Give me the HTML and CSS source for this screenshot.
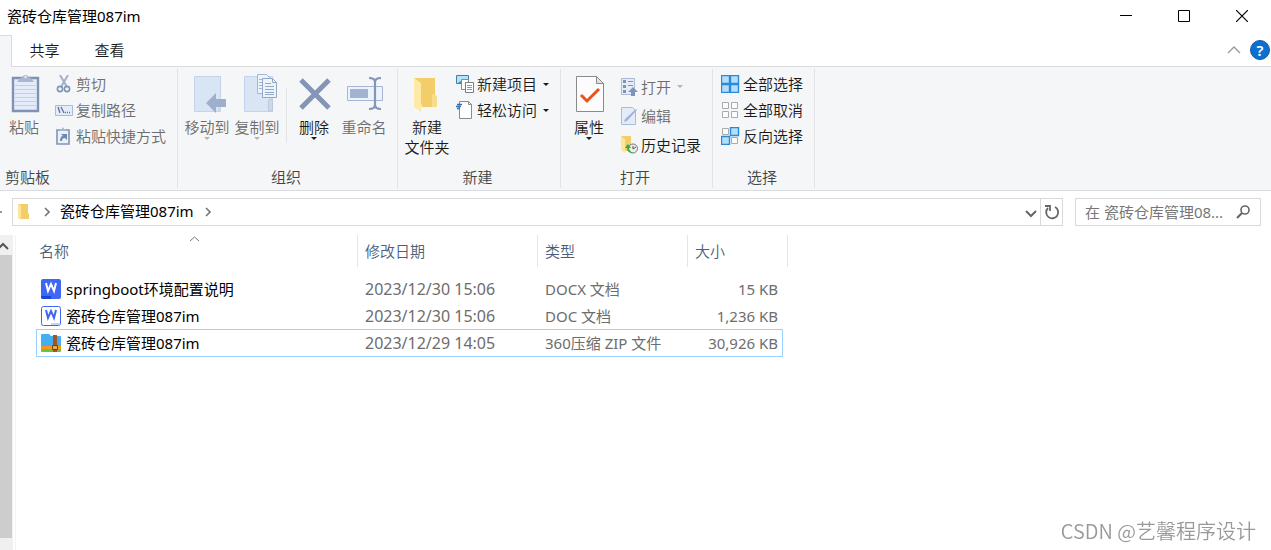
FILE: index.html
```html
<!DOCTYPE html>
<html lang="zh-CN">
<head>
  <meta charset="UTF-8">
  <title>瓷砖仓库管理087im</title>
  <link rel="stylesheet" href="styles.css">
</head>
<body>
  <header class="titlebar">
    <h1>瓷砖仓库管理087im</h1>
    <div class="window-buttons">
      <button aria-label="最小化"><svg width="12" height="12"><path d="M0 5.500h12" stroke="#000"/></svg></button>
      <button aria-label="最大化"><svg width="12" height="12"><path d="M.5 .5h11v11H.5z" fill="none" stroke="#000"/></svg></button>
      <button aria-label="关闭"><svg width="12" height="12"><path d="M0 0l12 12M12 0L0 12" stroke="#000" stroke-width="1.2"/></svg></button>
    </div>
  </header>

  <nav class="tabs">
    <span class="tab-edge"></span>
    <button class="tab">共享</button>
    <button class="tab">查看</button>
    <div class="tabs-right">
      <button aria-label="折叠功能区"><svg width="14" height="8"><path d="M1 7l6-6 6 6" fill="none" stroke="#999" stroke-width="1.3"/></svg></button>
      <button class="help" aria-label="帮助">?</button>
    </div>
  </nav>

  <section class="ribbon">
    <div class="group clipboard">
      <div class="tools">
        <button class="big" disabled>
          <svg width="50" height="44">
            <path d="M14 6h25v33H14z" fill="#e3ecf8" stroke="#8193b5" stroke-width="2.400"/>
            <path d="M16 13.500h21M16 17.500h21M16 21.500h21M16 25.500h21M16 29.500h21M16 33.500h21" stroke="#c3d0e4"/>
            <path d="M18 10l3-4h2c1-4 6-4 7 0h2l3 4z" fill="#a9b7d0"/>
            <circle cx="26.500" cy="5" r="1.200" fill="#e3ecf8"/>
          </svg>
          <span>粘贴</span>
        </button>
        <div class="list">
          <button disabled><svg width="18" height="18"><path d="M5 0l7 12M13 0L6 12" stroke="#a3b0ca" stroke-width="2"/><circle cx="5" cy="14" r="2.600" fill="none" stroke="#8193b5" stroke-width="1.600"/><circle cx="12" cy="14" r="2.600" fill="none" stroke="#8193b5" stroke-width="1.600"/></svg>剪切</button>
          <button disabled><svg width="18" height="18"><path d="M.5 4.500h17v10H.5z" fill="#e3ecf8" stroke="#a9bbd8"/><path d="M3 6l2 6M6 6l3 6M10 11.500h1M12 11.500h1M14 11.500h1" stroke="#5f7399" stroke-width="1.300"/></svg>复制路径</button>
          <button disabled><svg width="18" height="18"><path d="M2 3h12v14H2z" fill="#e8f0fa" stroke="#8193b5" stroke-width="1.600"/><path d="M5 4V2h2c0-2 2-2 2 0h2v2z" fill="#a9b7d0"/><path d="M5 14c0-3 1-5 3-5L6 7h6v6l-2-2c-2 0-3 1-3 3z" fill="#7187b0"/></svg>粘贴快捷方式</button>
        </div>
      </div>
      <div class="group-name">剪贴板</div>
    </div>

    <div class="group organize">
      <div class="tools">
        <button class="big" disabled>
          <svg width="50" height="44">
            <path d="M12.500 4.500h26v35h-26z" fill="#d9e4f4" stroke="#c3d3e9"/>
            <path d="M36 39V28l2-2h1v13z" fill="#cbd9ed"/>
            <path d="M24 31l10-10v6h10v8H34v6z" fill="#9fafcb"/>
          </svg>
          <span>移动到</span><i class="caret"></i>
        </button>
        <button class="big" disabled>
          <svg width="50" height="44">
            <path d="M12.500 4.500h28v35h-28z" fill="#d9e4f4" stroke="#c3d3e9"/>
            <path d="M36.500 39V29q0-2 2-2t2 2v10z" fill="#cbd9ed" stroke="#b9c9e0"/>
            <path d="M25.500 2.500h9l5 5v14h-14z" fill="#eef3fa" stroke="#a4b6d3"/>
            <path d="M27 7.500h8M27 10.500h8M27 13.500h8M27 16.500h8" stroke="#a4b6d3"/>
            <path d="M30.500 6.500h10l4 4v15h-14z" fill="#eef3fa" stroke="#94a8c9"/>
            <path d="M40.500 6.500v4h4" fill="none" stroke="#94a8c9"/>
            <path d="M33 11.500h6M33 14.500h9M33 17.500h9M33 20.500h9M33 22.500h9" stroke="#94a8c9"/>
          </svg>
          <span>复制到</span><i class="caret"></i>
        </button>
        <span class="separator"></span>
        <button class="big">
          <svg width="50" height="44"><path d="M12 8l28 28M40 8L12 36" stroke="#8495b7" stroke-width="5"/></svg>
          <span>删除</span><i class="caret"></i>
        </button>
        <button class="big" disabled>
          <svg width="50" height="44">
            <path d="M8.500 14.500h35v14h-35z" fill="#edf3fb" stroke="#a4b6d3"/>
            <path d="M11 17h18v9H11z" fill="#a3b2cf"/>
            <path d="M30 6q6 0 6 4v23q0 4-6 4M42 6q-6 0-6 4M36 33q0 4 6 4" fill="none" stroke="#8495b7" stroke-width="2.200"/>
          </svg>
          <span>重命名</span>
        </button>
      </div>
      <div class="group-name">组织</div>
    </div>

    <div class="group create">
      <div class="tools">
        <button class="big">
          <svg width="50" height="44">
            <path d="M12 6h21v17l2 2v10H20z" fill="#f2cd69"/>
            <path d="M12 6l7 5v29l-7-5z" fill="#ffe9a6"/>
            <path d="M30 22h3l2 3v10h-5z" fill="#f8dc8b"/>
          </svg>
          <span>新建<br>文件夹</span>
        </button>
        <div class="list">
          <button><svg width="18" height="18"><path d="M.5 .5h12v8H.5z" fill="#b9e1fb" stroke="#3f7ea8"/><path d="M2 8q4-5 9 0z" fill="#4d9a86"/><path d="M5.500 4.500h7v10h-7z" fill="#fff" stroke="#8b8b8b"/><path d="M9.500 7.500h8v10h-8z" fill="#fff" stroke="#7d7d7d"/><path d="M11 10.500h5M11 12.500h5M11 14.500h5" stroke="#62a7da"/></svg>新建项目<i class="caret"></i></button>
          <button><svg width="18" height="18"><path d="M3.500 .5h9l3 3v14h-12z" fill="#fff" stroke="#8b8b8b"/><path d="M12.500 .5v3h3" fill="none" stroke="#8b8b8b"/><path d="M1 3.500h5M0 5.500h5M1 7.500h3" stroke="#2d6fb5" stroke-width="1.300"/></svg>轻松访问<i class="caret"></i></button>
        </div>
      </div>
      <div class="group-name">新建</div>
    </div>

    <div class="group open">
      <div class="tools">
        <button class="big">
          <svg width="50" height="44">
            <path d="M12.500 4.500h20l7 7v28h-27z" fill="#fcfcfc" stroke="#8a8a8a"/>
            <path d="M32.500 4.500v7h7z" fill="#e2e2e2" stroke="#8a8a8a"/>
            <path d="M17 23l6 6 12-12" fill="none" stroke="#e8541a" stroke-width="3"/>
          </svg>
          <span>属性</span><i class="caret"></i>
        </button>
        <div class="list">
          <button disabled><svg width="17" height="18"><path d="M.5 .5h13v16H.5z" fill="#e3ecf8" stroke="#a9bbd8"/><path d="M2 2h3v3H2zM2 7h3v3H2zM2 12h3v3H2z" fill="#8193b5"/><path d="M7 3.500h5M7 7.500h5" stroke="#8193b5"/><path d="M7 14l5-5 5 5h-3v4h-4v-4z" fill="#8193b5"/></svg>打开<i class="caret"></i></button>
          <button disabled><svg width="17" height="18"><path d="M.5 .5h11l3 3v14H.5z" fill="#e3ecf8" stroke="#a9bbd8"/><path d="M3 15l1-3L15 2l1 1L6 14z" fill="#a3b3d0"/></svg>编辑</button>
          <button><svg width="17" height="18"><path d="M0 0h10v15H4z" fill="#f2cd69"/><path d="M0 0l4 3v14l-4-3z" fill="#ffe49a"/><circle cx="12" cy="12.500" r="4.500" fill="#eee" stroke="#777"/><path d="M12 10v3l3-2" fill="none" stroke="#555"/><path d="M4 12l3-4 3 4H8q0 3 4 5-6 0-6-5z" fill="#2fae3b"/></svg>历史记录</button>
        </div>
      </div>
      <div class="group-name">打开</div>
    </div>

    <div class="group select">
      <div class="tools">
        <div class="list">
          <button><svg width="19" height="18"><path d="M.5 .5h8v8h-8zM9.500 .5h8v8h-8zM.5 9.500h8v8h-8zM9.500 9.500h8v8h-8z" fill="#b4defc" stroke="#2a8ad8" stroke-width="1.400"/></svg>全部选择</button>
          <button><svg width="19" height="18"><path d="M1.500 1.500h6v6h-6zM10.500 1.500h6v6h-6zM1.500 10.500h6v6h-6zM10.500 10.500h6v6h-6z" fill="#fcfcfc" stroke="#aaa"/></svg>全部取消</button>
          <button><svg width="19" height="18"><path d="M1.500 1.500h6v6h-6zM10.500 10.500h6v6h-6z" fill="#fcfcfc" stroke="#aaa"/><path d="M9.500 .5h8v8h-8zM.5 9.500h8v8h-8z" fill="#b4defc" stroke="#2a8ad8" stroke-width="1.400"/></svg>反向选择</button>
        </div>
      </div>
      <div class="group-name">选择</div>
    </div>
  </section>

  <div class="location">
    <span class="up-edge"></span>
    <div class="address">
      <svg width="14" height="18"><path d="M1 1h10v9l1 1v5H4z" fill="#f2cd69"/><path d="M1 1l3 2v14l-3-2z" fill="#ffe49a"/></svg>
      <svg class="crumb-arrow" width="6" height="10"><path d="M1 1l4 4-4 4" fill="none" stroke="#777" stroke-width="1.600"/></svg>
      <a href="#">瓷砖仓库管理087im</a>
      <svg class="crumb-arrow" width="6" height="10"><path d="M1 1l4 4-4 4" fill="none" stroke="#777" stroke-width="1.600"/></svg>
      <button class="history" aria-label="以前的位置"><svg width="12" height="8"><path d="M1 1l5 5 5-5" fill="none" stroke="#666" stroke-width="2"/></svg></button>
      <button class="refresh" aria-label="刷新"><svg width="16" height="16"><path d="M11 3a6 6 0 1 1-7 1" fill="none" stroke="#666" stroke-width="1.800"/><path d="M1 2h5v5" fill="none" stroke="#666" stroke-width="1.800"/></svg></button>
    </div>
    <label class="search">
      <input type="text" placeholder="在 瓷砖仓库管理08..." aria-label="搜索">
      <svg width="14" height="14"><circle cx="9" cy="5" r="4" fill="none" stroke="#666" stroke-width="1.600"/><path d="M6 8l-5 5" stroke="#666" stroke-width="2.200"/></svg>
    </label>
  </div>

  <main>
    <div class="scrollbar">
      <svg width="12" height="20"><path d="M-2 14l5-5 5 5" fill="none" stroke="#555" stroke-width="2"/></svg>
      <div class="thumb"></div>
    </div>
    <div class="files">
      <table>
        <colgroup>
          <col class="col-name"><col class="col-date"><col class="col-type"><col class="col-size"><col>
        </colgroup>
        <thead>
          <tr>
            <th class="name">名称<svg class="sort" width="11" height="6"><path d="M1 5l4.500-4 4.500 4" fill="none" stroke="#777"/></svg></th>
            <th>修改日期</th>
            <th>类型</th>
            <th colspan="2">大小</th>
          </tr>
        </thead>
        <tbody>
          <tr>
            <td class="name"><div><svg width="20" height="20"><rect width="20" height="20" rx="2" fill="#3f66f5"/><path d="M0 17h10v3H2q-2 0-2-2z" fill="#1746d8"/><path d="M5 4l2 8 3-7 3 7 2-8" fill="none" stroke="#fff" stroke-width="2"/></svg>springboot环境配置说明</div></td>
            <td class="date">2023/12/30 15:06</td>
            <td>DOCX 文档</td>
            <td class="size">15 KB</td>
            <td class="rest"></td>
          </tr>
          <tr>
            <td class="name"><div><svg width="20" height="20"><rect x=".5" y=".5" width="19" height="19" rx="2" fill="#fff" stroke="#3f66f5"/><path d="M10 17h9v2h-9z" fill="#c5d2fc"/><path d="M5 4l2 8 3-7 3 7 2-8" fill="none" stroke="#3f66f5" stroke-width="2"/></svg>瓷砖仓库管理087im</div></td>
            <td class="date">2023/12/30 15:06</td>
            <td>DOC 文档</td>
            <td class="size">1,236 KB</td>
            <td class="rest"></td>
          </tr>
          <tr class="selected">
            <td class="name"><div><svg width="20" height="20"><path d="M0 2q0-1 1-1h7l2 2h9q1 0 1 1v9H0z" fill="#45adf2"/><path d="M0 13h20v3H0z" fill="#f59a1b"/><path d="M0 16h20v2q0 1-1 1H1q-1 0-1-1z" fill="#72c043"/><path d="M12 2h4v17h-4z" fill="#a4571c"/><path d="M11.500 12.500h5v4h-5z" fill="#f0a45a" stroke="#7c3d0e"/></svg>瓷砖仓库管理087im</div></td>
            <td class="date">2023/12/29 14:05</td>
            <td>360压缩 ZIP 文件</td>
            <td class="size">30,926 KB</td>
            <td class="rest"></td>
          </tr>
        </tbody>
      </table>
    </div>
  </main>
  <div class="watermark">CSDN @艺馨程序设计</div>
</body>
</html>
```
FILE: styles.css
```css
* {
  box-sizing: border-box;
}
body {
  margin: 0;
  min-height: 100vh;
  display: flex;
  flex-direction: column;
  background: #fff;
  color: #1a1a1a;
  font-family: "Noto Sans", "Noto Sans CJK SC", sans-serif;
  font-size: 15px;
  font-weight: 350;
  line-height: 20px;
  white-space: nowrap;
}
button {
  border: 0;
  padding: 0;
  background: none;
  color: inherit;
  font: inherit;
}
button:disabled {
  color: #6d6d6d;
}
svg {
  flex: none;
}

/* title bar */
.titlebar {
  display: flex;
  justify-content: space-between;
  height: 35px;
  padding-left: 7px;
}
h1 {
  margin: 0;
  font-size: 15px;
  font-weight: 400;
  line-height: 32px;
  color: #000;
}
.window-buttons {
  display: flex;
}
.window-buttons button {
  width: 58px;
  height: 32px;
  display: flex;
  align-items: center;
  justify-content: center;
}

/* ribbon tabs */
.tabs {
  display: flex;
  height: 32px;
  border-bottom: 1px solid #dadbdc;
}
.tab-edge {
  width: 12px;
  height: 32px;
  background: #f5f6f7;
  border: solid #dadbdc;
  border-width: 1px 1px 0 0;
}
.tab {
  width: 65px;
  padding-bottom: 2px;
}
.tabs-right {
  display: flex;
  align-items: center;
  gap: 9px;
  margin-left: auto;
  padding: 0 1px 2px 0;
}
.tabs-right button {
  display: flex;
}
.tabs-right .help {
  width: 20px;
  height: 20px;
  justify-content: center;
  border: 1px solid #1b5a9c;
  border-radius: 50%;
  background: #0a6fd0;
  color: #fff;
  line-height: 18px;
  font-weight: 600;
}

/* ribbon */
.ribbon {
  display: flex;
  height: 124px;
  padding: 2px 0;
  background: #f5f6f7;
  border-bottom: 1px solid #dadbdc;
}
.group {
  display: flex;
  flex-direction: column;
  justify-content: space-between;
  padding-bottom: 1px;
  border-right: 1px solid #e2e3e4;
}
.tools {
  display: flex;
  padding-top: 2px;
}
.group-name {
  padding-right: 3px;
  text-align: center;
  color: #444;
}
.clipboard {
  width: 178px;
}
.clipboard .group-name {
  padding-left: 5px;
  text-align: left;
}
.clipboard .big {
  width: 48px;
}
.organize {
  width: 220px;
}
.organize .tools {
  padding-left: 4px;
}
.create {
  width: 163px;
}
.create .tools {
  padding-left: 4px;
}
.open {
  width: 152px;
}
.open .tools {
  padding-left: 3px;
}
.select {
  width: 102px;
}
.select .tools {
  padding-left: 8px;
}
.big {
  width: 50px;
  display: flex;
  flex-direction: column;
  align-items: center;
  padding-top: 1px;
}
.big svg {
  margin-bottom: 1px;
}
.list {
  display: flex;
  flex-direction: column;
}
.list button {
  height: 26px;
  display: flex;
  align-items: center;
  gap: 3px;
}
.clipboard .list,
.open .list {
  padding-left: 7px;
}
.create .list {
  padding-left: 4px;
}
.open .list {
  padding-top: 1px;
}
.open .list button {
  height: 29px;
}
.caret {
  border: 3px solid transparent;
  border-top-color: currentColor;
  border-bottom: 0;
}
.list .caret {
  margin-left: 3px;
}
button:disabled .caret {
  border-top-color: #b5b5b5;
}
.separator {
  width: 1px;
  height: 55px;
  margin: 17px 2px 0 4px;
  background: #e2e3e4;
}

/* address bar */
.location {
  display: flex;
  padding: 7px 10px 9px 0;
}
.up-edge {
  width: 2px;
  height: 2px;
  margin: 13px 10px 0 0;
  background: #999;
}
.address {
  flex: 1;
  height: 28px;
  display: flex;
  align-items: center;
  padding-left: 4px;
  border: 1px solid #d9d9d9;
}
.address a {
  padding-bottom: 2px;
  color: #000;
  font-weight: 400;
  text-decoration: none;
}
.crumb-arrow {
  margin: 0 10px 0 13px;
}
.address a + .crumb-arrow {
  margin-left: 11px;
}
.history {
  margin-left: auto;
  padding-right: 3px;
}
.refresh {
  width: 22px;
  height: 26px;
  display: flex;
  align-items: center;
  justify-content: center;
  border-left: 1px solid #d9d9d9;
}
.search {
  width: 186px;
  height: 28px;
  margin-left: 12px;
  padding: 0 10px 0 9px;
  display: flex;
  align-items: center;
  border: 1px solid #d9d9d9;
}
.search input {
  flex: 1;
  min-width: 0;
  padding: 0;
  border: 0;
  outline: 0;
  font: inherit;
  font-weight: 400;
}
.search input::placeholder {
  color: #777;
}

/* file list */
main {
  flex: 1;
  display: flex;
}
.scrollbar {
  width: 13px;
  display: flex;
  flex-direction: column;
  padding-bottom: 12px;
  background: #f0f0f0;
}
.thumb {
  flex: 1;
  width: 12px;
  background: #cdcdcd;
}
.files {
  flex: 1;
  margin-left: 2px;
  padding-left: 20px;
  border-left: 1px solid #f3f3f3;
}
table {
  width: 752px;
  table-layout: fixed;
  border-spacing: 0;
}
.col-name {
  width: 322px;
}
.col-date {
  width: 180px;
}
.col-type {
  width: 150px;
}
.col-size {
  width: 95px;
}
th {
  position: relative;
  height: 32px;
  padding: 0 0 0 7px;
  border-right: 1px solid #e5e5e5;
  color: #4c607a;
  font-weight: 350;
  text-align: left;
}
th.name {
  padding-left: 3px;
}
.sort {
  position: absolute;
  top: 1px;
  left: 153px;
}
thead::after {
  content: "";
  display: block;
  height: 8px;
}
td {
  height: 27px;
  padding: 0 0 0 7px;
  border: solid transparent;
  border-width: 1px 0;
  color: #6d6d6d;
  font-weight: 400;
}
td.name {
  padding-left: 4px;
  border-left-width: 1px;
  color: #000;
}
td.name div {
  display: flex;
  align-items: center;
  gap: 5px;
}
td.date {
  font-size: 16px;
}
td.size {
  padding: 0 4px 0 0;
  border-right-width: 1px;
  text-align: right;
}
td.rest {
  padding: 0;
}
.selected td {
  height: 28px;
}
.selected td:not(.rest) {
  border-color: #99d1ff;
}
.watermark {
  position: fixed;
  right: 15px;
  bottom: 5px;
  color: #999;
  font-family: "Noto Sans CJK SC", sans-serif;
  font-size: 20px;
  font-weight: 350;
  line-height: 28px;
}
```
